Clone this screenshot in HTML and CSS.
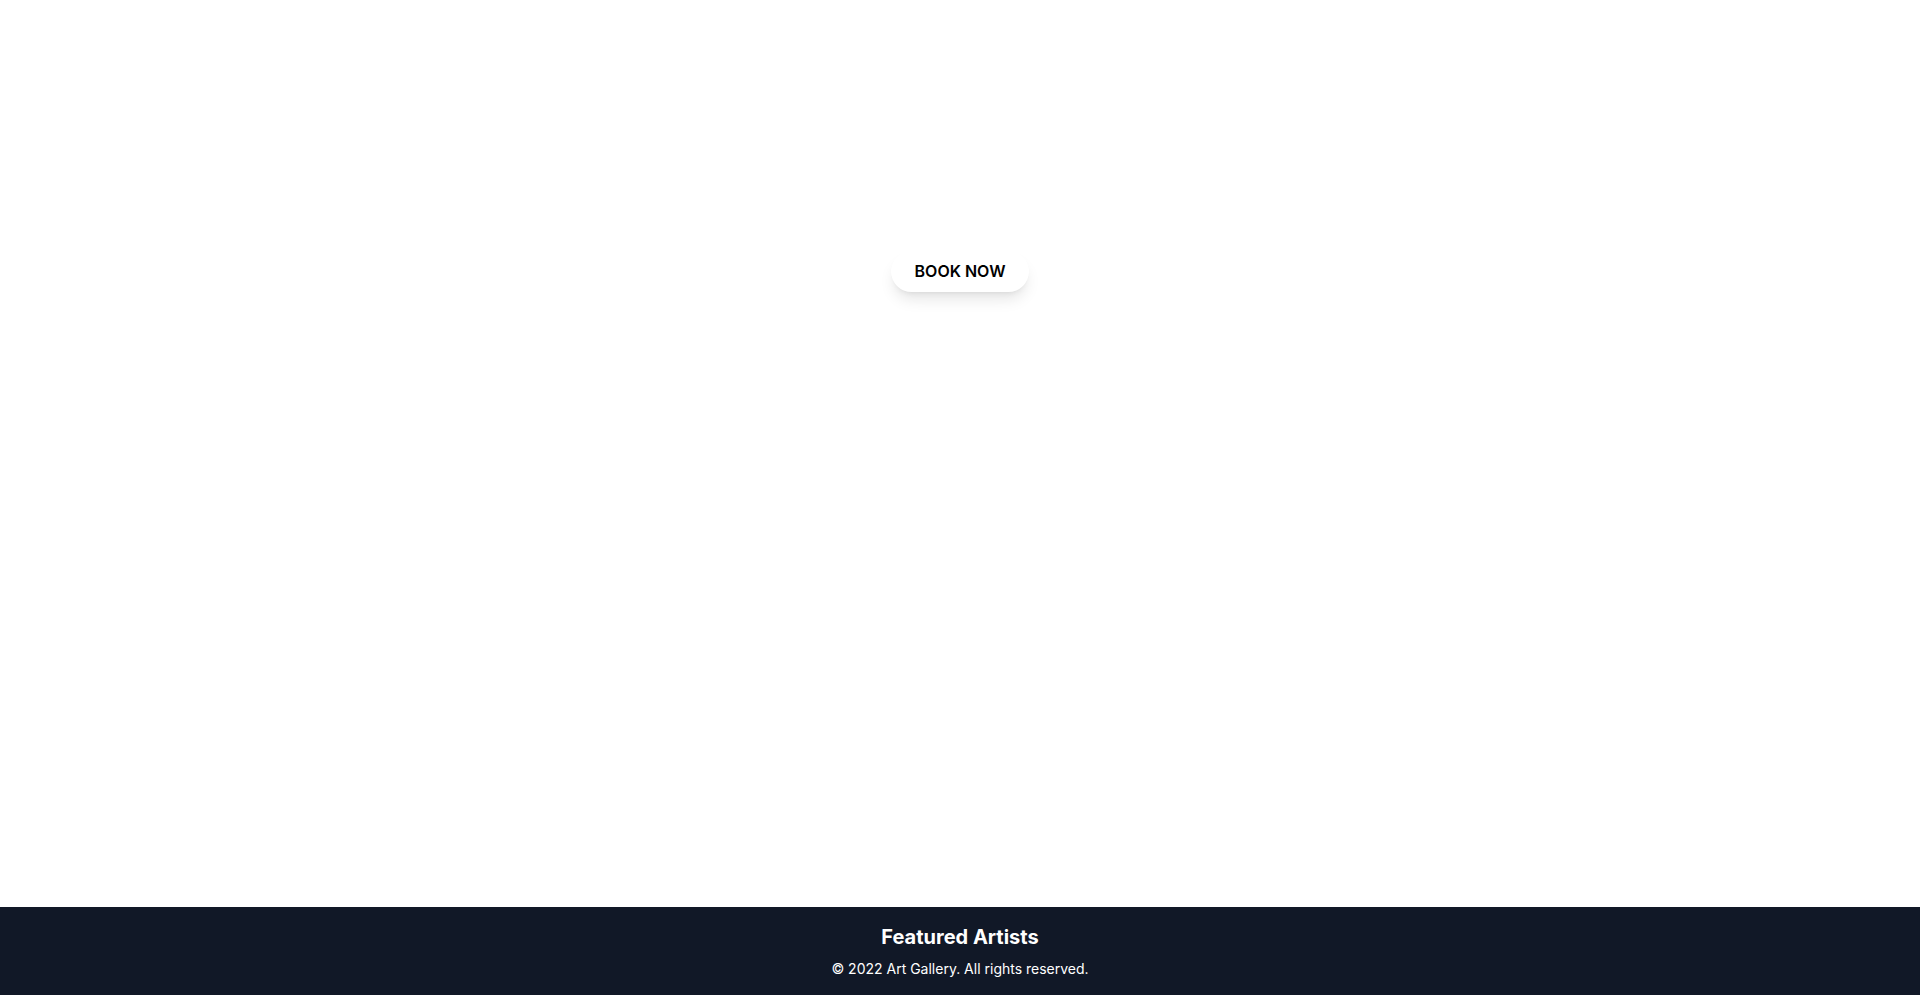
FILE: index.html
```html
<!DOCTYPE html>
<html lang="en">
<head>
<meta charset="utf-8">
<title>Art Gallery</title>
<link rel="stylesheet" href="styles.css">
</head>
<body>
<div class="page">
  <main class="hero">
    <a class="book-btn" href="#">BOOK NOW</a>
  </main>
  <footer class="footer">
    <h2 class="footer-title">Featured Artists</h2>
    <p class="footer-copy">© 2022 Art Gallery. All rights reserved.</p>
  </footer>
</div>
</body>
</html>
```

FILE: styles.css
```css
* { box-sizing: border-box; }
html, body { margin: 0; padding: 0; }
body {
  font-family: Inter, "Liberation Sans", Arial, sans-serif;
  background: #ffffff;
  color: #000;
}
.page {
  display: flex;
  flex-direction: column;
  min-height: 100vh;
}
.hero {
  flex: 1;
  display: flex;
  flex-direction: column;
  align-items: center;
  padding-top: 251px;
}
.book-btn {
  display: inline-block;
  background: #ffffff;
  color: #000000;
  text-decoration: none;
  font-weight: 600;
  font-size: 16px;
  line-height: 24px;
  padding: 8px 24px 9px;
  border-radius: 9999px;
  box-shadow: 0 10px 15px -3px rgba(0,0,0,0.1), 0 4px 6px -4px rgba(0,0,0,0.1);
}
.footer {
  background: #111827;
  color: #ffffff;
  text-align: center;
  padding: 16px 16px 16px;
}
.footer-title {
  margin: 0;
  font-size: 20px;
  line-height: 28px;
  font-weight: 700;
}
.footer-copy {
  margin: 8px 0 0;
  font-size: 14px;
  line-height: 20px;
}
```
